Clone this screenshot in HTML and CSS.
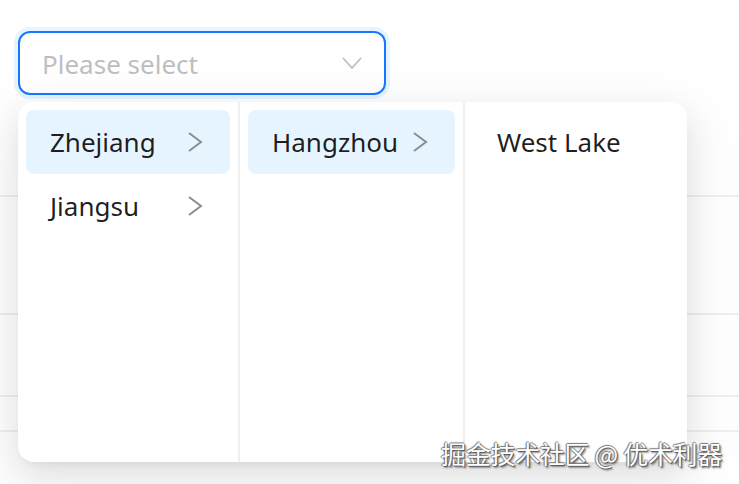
FILE: index.html
```html
<!DOCTYPE html>
<html lang="en">
<head>
  <meta charset="UTF-8">
  <title>Cascader</title>
  <link rel="stylesheet" href="styles.css">
</head>
<body>
  <div class="page">
    <div class="select">
      <span class="placeholder">Please select</span>
      <svg class="select-arrow" width="20" height="14" viewBox="0 0 20 14">
        <path d="M1 2 L10 12 L19 2" fill="none" stroke="#bfbfbf" stroke-width="1.8"/>
      </svg>
    </div>

    <!-- table rows behind the dropdown -->
    <div class="rows">
      <div class="row row-1"></div>
      <div class="row row-2"></div>
      <div class="row row-3"></div>
      <div class="row row-4"></div>
    </div>

    <div class="dropdown">
      <ul class="menu menu-1">
        <li class="item active">
          <span>Zhejiang</span>
          <svg class="expand" width="15" height="22" viewBox="0 0 15 22"><path d="M1 2 L13 11 L1 20" fill="none" stroke="#8c8c8c" stroke-width="2"/></svg>
        </li>
        <li class="item">
          <span>Jiangsu</span>
          <svg class="expand" width="15" height="22" viewBox="0 0 15 22"><path d="M1 2 L13 11 L1 20" fill="none" stroke="#8c8c8c" stroke-width="2"/></svg>
        </li>
      </ul>
      <ul class="menu menu-2">
        <li class="item active">
          <span>Hangzhou</span>
          <svg class="expand" width="15" height="22" viewBox="0 0 15 22"><path d="M1 2 L13 11 L1 20" fill="none" stroke="#8c8c8c" stroke-width="2"/></svg>
        </li>
      </ul>
      <ul class="menu menu-3">
        <li class="item">
          <span>West Lake</span>
        </li>
      </ul>
    </div>

    <div class="watermark">掘金技术社区 @ 优术利器</div>
  </div>
</body>
</html>
```

FILE: styles.css
```css
* {
  margin: 0;
  padding: 0;
  box-sizing: border-box;
}

body {
  font-family: "Noto Sans", "Segoe UI", sans-serif;
  background: #ffffff;
  color: rgba(0, 0, 0, 0.88);
  width: 739px;
  height: 484px;
  overflow: hidden;
}

.page {
  position: relative;
  height: 484px;
  padding-top: 31px;
}

.select {
  margin-left: 18px;
  width: 368px;
  height: 64px;
  border: 2px solid #1677ff;
  border-radius: 12px;
  box-shadow: 0 0 0 4px rgba(5, 145, 255, 0.1);
  display: flex;
  align-items: center;
  justify-content: space-between;
  padding: 0 22px 0 22px;
}

.placeholder {
  font-size: 26px;
  color: #bfbfbf;
  position: relative;
  top: 1px;
}

.rows {
  display: flex;
  flex-direction: column;
}

.row {
  border-bottom: 2px solid #f0f0f0;
}

.row-1 { height: 102px; }
.row-2 { height: 118px; }
.row-3 { height: 82px; }
.row-4 { height: 35px; }

.dropdown {
  position: absolute;
  top: 102px;
  left: 18px;
  width: 669px;
  height: 360px;
  background: #ffffff;
  border-radius: 16px;
  box-shadow: 0 12px 32px 0 rgba(0, 0, 0, 0.08),
              0 6px 12px -8px rgba(0, 0, 0, 0.12),
              0 18px 56px 16px rgba(0, 0, 0, 0.05);
  display: flex;
}

.menu {
  list-style: none;
  height: 100%;
  padding: 8px;
  border-right: 2px solid #f0f0f0;
}

.menu-1 { width: 222px; }
.menu-2 { width: 225px; }

.menu-3 {
  flex: 1;
  border-right: none;
}

.item {
  height: 64px;
  padding: 0 27px 0 24px;
  border-radius: 8px;
  display: flex;
  align-items: center;
  justify-content: space-between;
  font-size: 26px;
  line-height: 1;
}

.item.active {
  background: #e6f4ff;
}

.watermark {
  position: absolute;
  right: 17px;
  top: 435px;
  font-family: "Noto Sans CJK SC", sans-serif;
  font-size: 25px;
  letter-spacing: -0.3px;
  color: #ffffff;
  text-shadow: 1px 1px 1px #555, -1px 0 1px #777, 0 -1px 1px #777, 2px 2px 2px rgba(0, 0, 0, 0.4);
}
```
